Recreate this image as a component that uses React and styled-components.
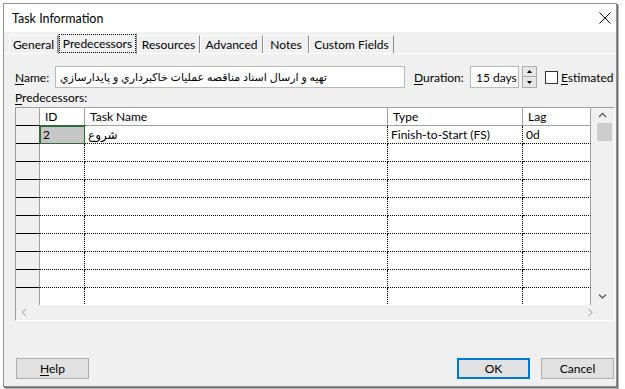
import React from 'react';
import styled, { createGlobalStyle } from 'styled-components';

const GlobalStyle = createGlobalStyle`
  html, body {
    margin: 0;
    padding: 0;
    background: #fff;
  }

  body {
    font-family: Lato, "DejaVu Sans", sans-serif;
    font-size: 12px;
    color: #000;
  }

  * {
    box-sizing: border-box;
  }
`;

const Screen = styled.div`
  width: 625px;
  height: 389px;
  padding: 3px 0 0 3px;
  background: #fff;
  overflow: hidden;
`;

const Dialog = styled.div`
  width: 614px;
  height: 384px;
  display: flex;
  flex-direction: column;
  background: #f0f0f0;
  border: 1px solid #8f8f8f;
  box-shadow: 1px 1px 0 #6d6d6d, 2px 2px 0 #b5b5b5;
`;

const TitleBar = styled.div`
  height: 28px;
  flex: none;
  display: flex;
  align-items: center;
  justify-content: space-between;
  padding: 0 5px 0 8px;
  background: #fff;
`;

const Title = styled.span`
  font-size: 12.5px;
`;

const CloseButton = styled.div`
  width: 12px;
  height: 12px;
  display: flex;
`;

const TabStrip = styled.div`
  height: 20px;
  margin-top: 2px;
  flex: none;
  display: flex;
  align-items: flex-end;
  padding-left: 5px;
  border-bottom: 1px solid #fff;
`;

const Tab = styled.div`
  width: ${({ width }) => width}px;
  height: ${({ active }) => (active ? 21 : 18)}px;
  margin-bottom: ${({ active }) => (active ? -1 : 0)}px;
  display: flex;
  align-items: center;
  justify-content: center;
  padding-bottom: ${({ active }) => (active ? 2 : 0)}px;
  background: #f0f0f0;
  border-top: 1px solid #fff;
  border-left: 1px solid ${({ active }) => (active ? '#a0a0a0' : '#fff')};
  border-right: 1px solid #8c8c8c;
  white-space: nowrap;
`;

const FocusText = styled.span`
  outline: 1px dotted #000;
  outline-offset: 1px;
  padding: 0 2px;
  line-height: 15px;
`;

const Panel = styled.div`
  flex: 1;
  display: flex;
  flex-direction: column;
  padding: 12px 2px 7px 11px;
`;

const NameRow = styled.div`
  height: 22px;
  display: flex;
  align-items: center;
`;

const Label = styled.span`
  width: ${({ width }) => width}px;
  margin-left: ${({ gap }) => gap || 0}px;
  flex: none;
  white-space: nowrap;
`;

const Key = styled.span`
  text-decoration: underline;
  text-underline-offset: 2px;
`;

const TextBox = styled.div`
  width: ${({ width }) => width}px;
  height: 22px;
  flex: none;
  display: flex;
  align-items: center;
  padding-left: ${({ pad }) => pad}px;
  font-size: ${({ size }) => size || 12}px;
  background: #fff;
  border: 1px solid #b9b9b9;
  white-space: nowrap;
  overflow: hidden;
`;

const Spinner = styled.div`
  width: 15px;
  height: 22px;
  margin-left: 3px;
  flex: none;
  display: flex;
  flex-direction: column;
`;

const SpinButton = styled.div`
  height: 11px;
  display: flex;
  align-items: center;
  justify-content: center;
  background: #e6e6e6;
  border: 1px solid #adadad;
  border-top-width: ${({ down }) => (down ? 0 : 1)}px;
`;

const CheckBox = styled.div`
  width: 13px;
  height: 13px;
  margin-left: 8px;
  flex: none;
  background: #fff;
  border: 1px solid #333;
`;

const SectionLabel = styled.div`
  height: 19px;
  line-height: 19px;
`;

const GridBox = styled.div`
  width: 600px;
  height: 214px;
  display: flex;
  flex-direction: column;
  border-top: 1px solid #a0a0a0;
  border-left: 1px solid #a0a0a0;
  border-right: 1px solid #fff;
  border-bottom: 1px solid #fff;
`;

const GridBody = styled.div`
  height: 197px;
  display: flex;
  background: #f0f0f0;
`;

const Table = styled.div`
  width: 575px;
  height: 197px;
  overflow: hidden;
  background: #fff;
`;

const Row = styled.div`
  height: 18px;
  display: flex;
`;

const HeadCell = styled.div`
  width: ${({ width }) => width}px;
  height: 18px;
  flex: none;
  padding-left: 5px;
  line-height: 17px;
  background: ${({ corner }) => (corner ? '#f0f0f0' : '#fff')};
  border-right: 1px solid #a0a0a0;
  border-bottom: 1px solid ${({ corner }) => (corner ? '#000' : '#a0a0a0')};
`;

const RowHead = styled.div`
  width: 24px;
  height: 18px;
  flex: none;
  background: #f0f0f0;
  border-right: 1px solid #a0a0a0;
  border-bottom: 1px solid #000;
`;

const Cell = styled.div`
  width: ${({ width }) => width}px;
  height: 18px;
  flex: none;
  padding-left: 3px;
  line-height: 17px;
  white-space: nowrap;
  background: ${({ selected }) => (selected ? '#c6c6c6' : '#fff')};
  border-right: 1px ${({ last }) => (last ? 'solid #a0a0a0' : 'dotted #000')};
  border-bottom: 1px dotted #000;
  outline: ${({ selected }) => (selected ? '2px solid #2f6b35' : 'none')};
  outline-offset: -1px;
`;

const VScroll = styled.div`
  width: 22px;
  display: flex;
  flex-direction: column;
  background: #f0f0f0;
`;

const ArrowBox = styled.div`
  width: ${({ width }) => width || 22}px;
  height: ${({ height }) => height}px;
  flex: none;
  display: flex;
  align-items: center;
  justify-content: center;
`;

const Thumb = styled.div`
  width: 15px;
  height: 18px;
  margin-left: 6px;
  background: #cdcdcd;
`;

const Spacer = styled.div`
  flex: 1;
`;

const HScroll = styled.div`
  height: 15px;
  display: flex;
  background: #f0f0f0;
`;

const ButtonRow = styled.div`
  margin-top: auto;
  display: flex;
  padding-left: 1px;
`;

const Button = styled.div`
  width: 73px;
  height: 21px;
  margin-left: ${({ gap }) => gap || 0}px;
  display: flex;
  align-items: center;
  justify-content: center;
  background: #e1e1e1;
  border: 1px solid ${({ primary }) => (primary ? '#0078d7' : '#adadad')};
  box-shadow: ${({ primary }) => (primary ? 'inset 0 0 0 1px #0078d7' : 'none')};
`;

const tabs = [
  { label: 'General', width: 49 },
  { label: 'Predecessors', width: 79, active: true },
  { label: 'Resources', width: 63 },
  { label: 'Advanced', width: 63 },
  { label: 'Notes', width: 46 },
  { label: 'Custom Fields', width: 85 },
];

const columns = [
  { key: 'id', title: 'ID', width: 45 },
  { key: 'name', title: 'Task Name', width: 303 },
  { key: 'type', title: 'Type', width: 135 },
  { key: 'lag', title: 'Lag', width: 68 },
];

const rows = [
  { id: '2', name: 'شروع', type: 'Finish-to-Start (FS)', lag: '0d' },
  {}, {}, {}, {}, {}, {}, {}, {}, {}, {},
];

const Chevron = ({ dir, color = '#606060' }) => {
  const points = {
    up: '1,5 4.5,1.5 8,5',
    down: '1,1.5 4.5,5 8,1.5',
    left: '5,1 1.5,4.5 5,8',
    right: '1.5,1 5,4.5 1.5,8',
  }[dir];
  const size = dir === 'up' || dir === 'down' ? [9, 7] : [7, 9];
  return (
    <svg width={size[0]} height={size[1]} viewBox={`0 0 ${size[0]} ${size[1]}`}>
      <polyline points={points} fill="none" stroke={color} strokeWidth="1.4" />
    </svg>
  );
};

const Triangle = ({ down }) => (
  <svg width="5" height="3" viewBox="0 0 5 3">
    <polygon points={down ? '0,0 5,0 2.5,3' : '0,3 5,3 2.5,0'} fill="#000" />
  </svg>
);

const App = () => (
  <Screen>
    <GlobalStyle />
    <Dialog>
      <TitleBar>
        <Title>Task Information</Title>
        <CloseButton>
          <svg width="12" height="12" viewBox="0 0 12 12">
            <path d="M0.5 0.5 L11.5 11.5 M11.5 0.5 L0.5 11.5" stroke="#000" strokeWidth="1" />
          </svg>
        </CloseButton>
      </TitleBar>

      <TabStrip>
        {tabs.map(tab => (
          <Tab key={tab.label} width={tab.width} active={tab.active}>
            {tab.active ? <FocusText>{tab.label}</FocusText> : tab.label}
          </Tab>
        ))}
      </TabStrip>

      <Panel>
        <NameRow>
          <Label width={40}><Key>N</Key>ame:</Label>
          <TextBox width={350} pad={4} size={11}>
            تهیه و ارسال اسناد مناقصه عملیات خاکبرداري و پایدارسازي
          </TextBox>
          <Label width={56} gap={9}><Key>D</Key>uration:</Label>
          <TextBox width={49} pad={5}>15 days</TextBox>
          <Spinner>
            <SpinButton><Triangle /></SpinButton>
            <SpinButton down><Triangle down /></SpinButton>
          </Spinner>
          <CheckBox />
          <Label gap={3}><Key>E</Key>stimated</Label>
        </NameRow>

        <SectionLabel><Key>P</Key>redecessors:</SectionLabel>

        <GridBox>
          <GridBody>
            <Table>
              <Row>
                <HeadCell width={24} corner />
                {columns.map(col => (
                  <HeadCell key={col.key} width={col.width}>{col.title}</HeadCell>
                ))}
              </Row>
              {rows.map((row, i) => (
                <Row key={i}>
                  <RowHead />
                  {columns.map((col, c) => (
                    <Cell
                      key={col.key}
                      width={col.width}
                      last={c === columns.length - 1}
                      selected={i === 0 && col.key === 'id'}
                    >
                      {row[col.key]}
                    </Cell>
                  ))}
                </Row>
              ))}
            </Table>
            <VScroll>
              <ArrowBox height={15}><Chevron dir="up" /></ArrowBox>
              <Thumb />
              <Spacer />
              <ArrowBox height={17}><Chevron dir="down" /></ArrowBox>
            </VScroll>
          </GridBody>
          <HScroll>
            <ArrowBox width={17} height={15}><Chevron dir="left" color="#bdbdbd" /></ArrowBox>
            <Spacer />
            <ArrowBox width={17} height={15}><Chevron dir="right" color="#bdbdbd" /></ArrowBox>
            <ArrowBox width={15} height={15} />
          </HScroll>
        </GridBox>

        <ButtonRow>
          <Button><span><Key>H</Key>elp</span></Button>
          <Spacer />
          <Button primary>OK</Button>
          <Button gap={11}>Cancel</Button>
        </ButtonRow>
      </Panel>
    </Dialog>
  </Screen>
);

export default App;
